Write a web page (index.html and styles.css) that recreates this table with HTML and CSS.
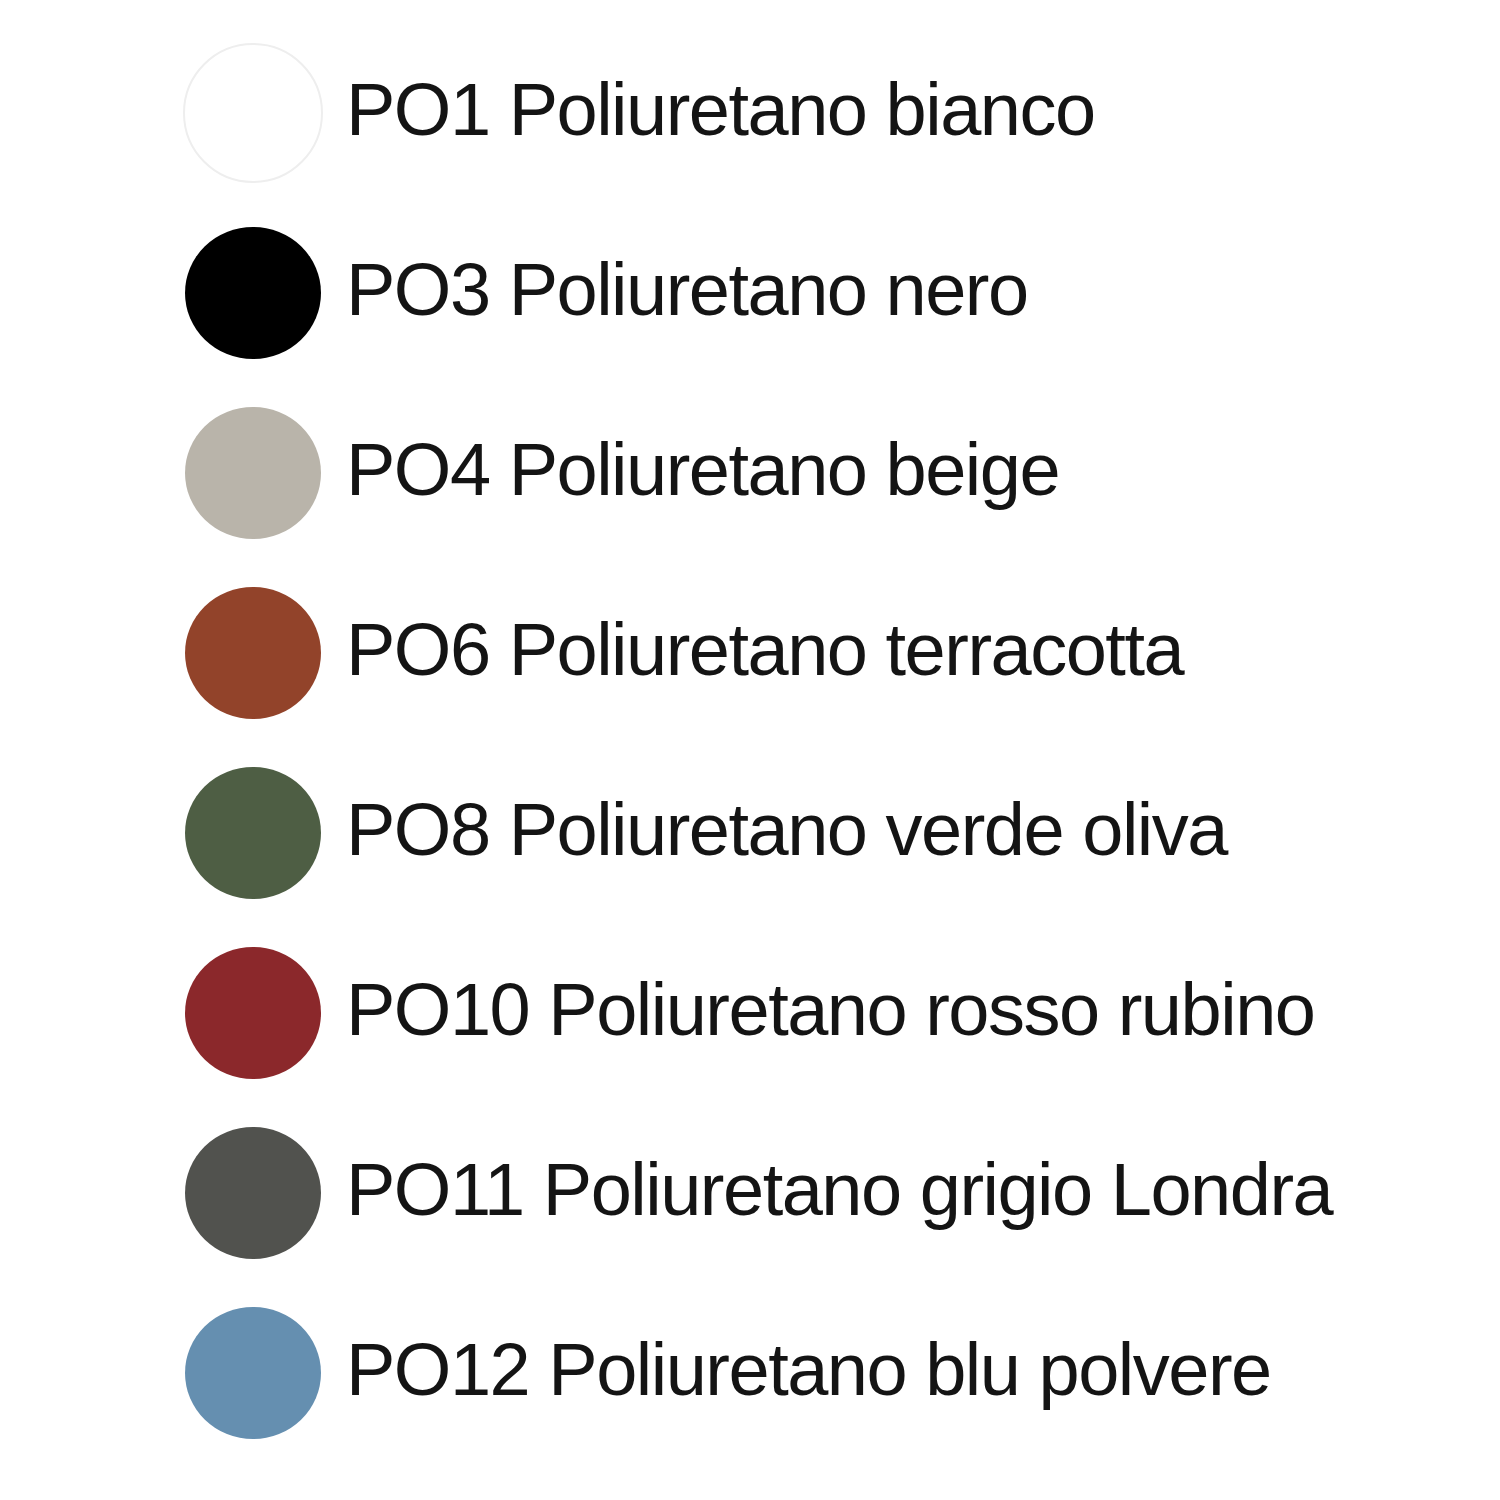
FILE: index.html
```html
<!DOCTYPE html>
<html lang="it">
<head>
    <meta charset="UTF-8">
    <title>Colori poliuretano</title>
    <link rel="stylesheet" href="styles.css">
</head>
<body>

    <ul class="swatches">
        <li class="swatch"><span class="dot dot-white"></span><span class="label">PO1 Poliuretano bianco</span></li>
        <li class="swatch"><span class="dot dot-black"></span><span class="label">PO3 Poliuretano nero</span></li>
        <li class="swatch"><span class="dot dot-beige"></span><span class="label">PO4 Poliuretano beige</span></li>
        <li class="swatch"><span class="dot dot-terracotta"></span><span class="label">PO6 Poliuretano terracotta</span></li>
        <li class="swatch"><span class="dot dot-olive"></span><span class="label">PO8 Poliuretano verde oliva</span></li>
        <li class="swatch"><span class="dot dot-ruby"></span><span class="label">PO10 Poliuretano rosso rubino</span></li>
        <li class="swatch"><span class="dot dot-london"></span><span class="label">PO11 Poliuretano grigio Londra</span></li>
        <li class="swatch"><span class="dot dot-blue"></span><span class="label">PO12 Poliuretano blu polvere</span></li>
    </ul>

</body>
</html>
```

FILE: styles.css
```css
/* --- Page --- */
body {
    font-family: "Liberation Sans", Arial, sans-serif;
    background-color: #ffffff;
    color: #141414;
    margin: 0;
}

/* --- Swatch list --- */
.swatches {
    list-style: none;
    margin: 0;
    padding: 23px 0 0 185px;
}

.swatch {
    display: flex;
    align-items: center;
    gap: 25px;
    height: 180px;
}

.dot {
    flex: none;
    width: 136px;
    height: 132px;
    border-radius: 50%;
}

.label {
    font-size: 74px;
    line-height: 1;
    letter-spacing: -1.5px;
    margin-bottom: 7px;
}

/* Colours */
.dot-white {
    width: 136px;
    height: 136px;
    border: 2px solid #eeeeee;
    margin-left: -2px;
    margin-right: -2px;
}

.dot-black { background-color: #000000; }
.dot-beige { background-color: #b9b4aa; }
.dot-terracotta { background-color: #92432a; }
.dot-olive { background-color: #4e5e44; }
.dot-ruby { background-color: #8b282b; }
.dot-london { background-color: #51524e; }
.dot-blue { background-color: #658fb0; }
```
